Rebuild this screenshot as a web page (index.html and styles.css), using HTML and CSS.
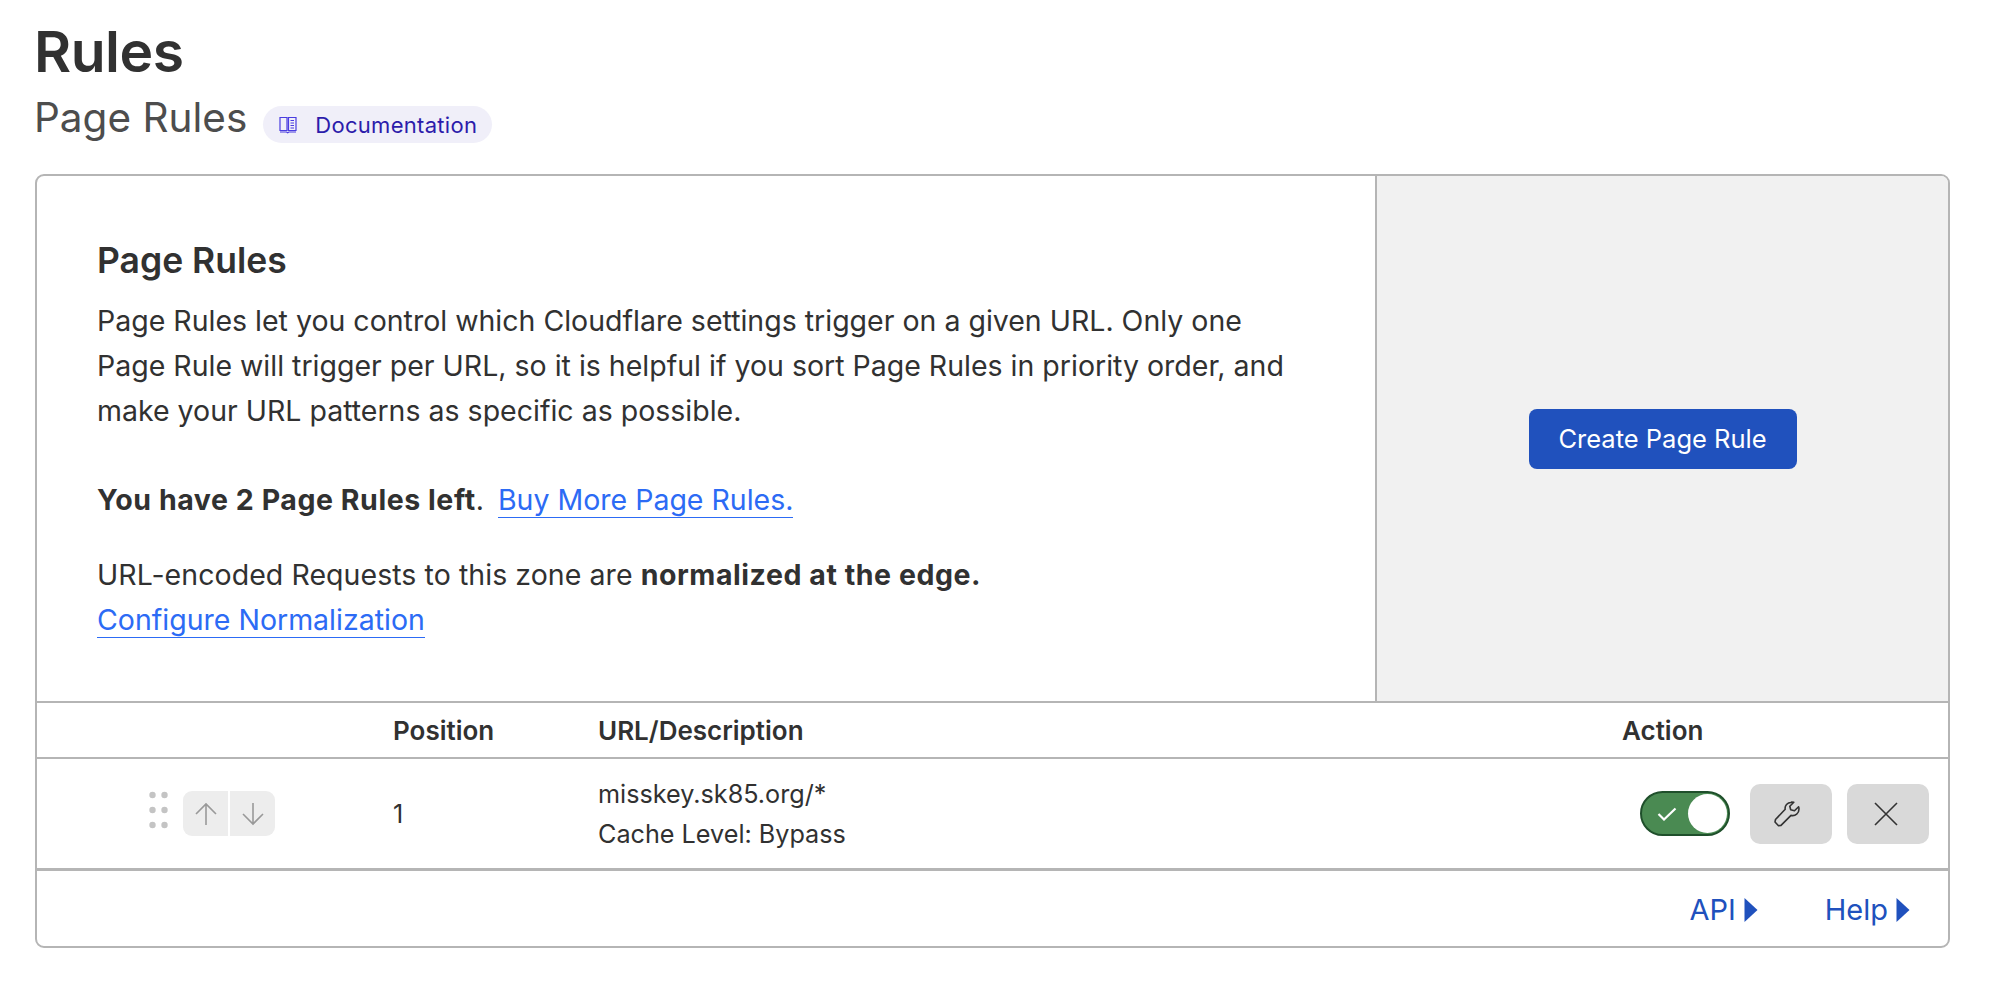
FILE: index.html
```html
<!DOCTYPE html>
<html lang="en">
<head>
<meta charset="utf-8">
<title>Page Rules</title>
<link rel="stylesheet" href="styles.css">
</head>
<body>
<main class="page">
  <h1 class="title">Rules</h1>
  <div class="subhead">
    <h2 class="subtitle">Page Rules</h2>
    <a class="doc-pill" href="#">
      <svg class="doc-icon" viewBox="0 0 18 18" fill="none" stroke="currentColor" stroke-width="1.2"><path d="M1 1.500h7v13H1zM9.500 1.500H17v13H9.500zM1 16h6.500l1.200.8 1.200-.8H17M11.500 4.500h3.500M11.500 7h3.500M11.500 9.500h3.500M11.500 12h3.500"/></svg>
      <span class="doc-label">Documentation</span>
    </a>
  </div>
  <section class="card">
    <div class="intro">
      <div class="intro-text">
        <h3 class="card-title">Page Rules</h3>
        <p class="para">Page Rules let you control which Cloudflare settings trigger on a given URL. Only one<br>Page Rule will trigger per URL, so it is helpful if you sort Page Rules in priority order, and<br>make your URL patterns as specific as possible.</p>
        <p class="para para-gap"><strong>You have 2 Page Rules left</strong>.&nbsp; <a class="link" href="#">Buy More Page Rules.</a></p>
        <p class="para para-gap-sm">URL-encoded Requests to this zone are <strong>normalized at the edge.</strong><br><a class="link" href="#">Configure Normalization</a></p>
      </div>
      <div class="intro-side">
        <button class="primary" type="button">Create Page Rule</button>
      </div>
    </div>
    <div class="row head-row">
      <div class="col-handle"></div>
      <div class="col-pos">Position</div>
      <div class="col-url">URL/Description</div>
      <div class="col-action">Action</div>
    </div>
    <div class="row rule-row">
      <div class="col-handle">
        <svg class="grip" viewBox="0 0 19 39" fill="#c4c4c4"><circle cx="3.500" cy="4" r="3.200"/><circle cx="15.500" cy="4" r="3.200"/><circle cx="3.500" cy="19" r="3.200"/><circle cx="15.500" cy="19" r="3.200"/><circle cx="3.500" cy="34" r="3.200"/><circle cx="15.500" cy="34" r="3.200"/></svg>
        <div class="stepper">
          <span class="step"><svg viewBox="0 0 22 24" fill="none" stroke="#999" stroke-width="1.600"><path d="M11 23V2M1 12 11 2l10 10"/></svg></span>
          <span class="step"><svg viewBox="0 0 22 24" fill="none" stroke="#999" stroke-width="1.600"><path d="M11 1v21M1 12l10 10 10-10"/></svg></span>
        </div>
      </div>
      <div class="col-pos">1</div>
      <div class="col-url">
        <div>misskey.sk85.org/*</div>
        <div>Cache Level: Bypass</div>
      </div>
      <div class="col-action actions">
        <span class="toggle">
          <svg class="check" viewBox="0 0 20 14" fill="none" stroke="#fff" stroke-width="2.200"><path d="M1.500 7 7 12.500 18.500 1.500"/></svg>
          <span class="knob"></span>
        </span>
        <button class="icon-btn icon-btn-wrench" type="button" aria-label="Edit">
          <svg viewBox="0 0 26 26" fill="none" stroke="#333" stroke-width="1.600" stroke-linejoin="round"><path d="M17 1.500c-3.500 0-6.500 3-5.800 6.800L1.500 18.500l-.5 2.500 3.500 3.800 2.500-.4 10-10c4.500 1 8-2.200 8-6.400 0-.8-.1-1.500-.4-2.200l-4.100 4-3.800-1-.9-3.500 4-4c-.7-.2-1.500-.3-2.300-.3z"/></svg>
        </button>
        <button class="icon-btn icon-btn-x" type="button" aria-label="Delete">
          <svg viewBox="0 0 24 24" fill="none" stroke="#333" stroke-width="1.600"><path d="M1 1l22 22M23 1 1 23"/></svg>
        </button>
      </div>
    </div>
    <div class="foot">
      <a class="foot-link" href="#">API<svg class="caret" viewBox="0 0 13 24" fill="currentColor"><path d="M0 0l13 12L0 24z"/></svg></a>
      <a class="foot-link" href="#">Help<svg class="caret" viewBox="0 0 13 24" fill="currentColor"><path d="M0 0l13 12L0 24z"/></svg></a>
    </div>
  </section>
</main>
</body>
</html>
```

FILE: styles.css
```css
* { box-sizing: border-box; }
html, body { margin: 0; background: #fff; }
body { font-family: Inter, "Liberation Sans", sans-serif; color: #313131; }
.page { padding: 20px 50px 0 34px; }
.title { margin: 0; font-size: 57px; line-height: 64px; font-weight: 600; color: #313131; letter-spacing: -0.5px; }
.subhead { display: flex; align-items: center; gap: 16px; margin-top: 7px; height: 54px; }
.subtitle { margin: 0; font-size: 40.500px; line-height: 54px; font-weight: 400; color: #4d4d4d; }
.doc-pill { display: inline-flex; align-items: center; gap: 18px; height: 37px; margin-top: 13px; padding: 0 15px 0 16px; border-radius: 19px; background: #f0eff9; color: #2c1cab; font-size: 22px; text-decoration: none; }
.doc-icon { width: 18px; height: 18px; color: #4a3de0; }
.doc-label { letter-spacing: 0.3px; }
.card { margin: 29px 0 0 1px; width: 1915px; border: 2px solid #b5b5b5; border-radius: 9px; overflow: hidden; }
.intro { display: flex; height: 527px; border-bottom: 2px solid #b5b5b5; }
.intro-text { width: 1340px; padding: 63px 0 0 60px; border-right: 2px solid #b5b5b5; }
.card-title { margin: 0 0 15px; font-size: 35.500px; line-height: 44px; font-weight: 600; }
.para { margin: 0; font-size: 28.500px; line-height: 45px; white-space: nowrap; }
.para-gap { margin-top: 44px; }
.para-gap-sm { margin-top: 30px; letter-spacing: 0.06px; }
.para strong { font-weight: 700; letter-spacing: 0.56px; }
.link { color: #2c6bf5; letter-spacing: 0; text-decoration: none; border-bottom: 1.500px solid #2c6bf5; }
.para-gap .link { margin-left: -2px; }
.intro-side { flex: 1; display: flex; align-items: center; justify-content: center; background: #f1f1f1; }
.primary { width: 268px; height: 60px; border: 0; border-radius: 8px; background: #2051bd; color: #fff; font: 400 25.500px Inter, sans-serif; }
.row { display: flex; align-items: center; }
.head-row { height: 56px; padding-top: 1px; border-bottom: 2px solid #b5b5b5; font-size: 26px; font-weight: 600; }
.rule-row { height: 112px; border-bottom: 3px solid #b5b5b5; font-size: 25.200px; }
.col-handle { width: 356px; display: flex; align-items: center; padding-left: 112px; gap: 15px; }
.col-pos { width: 205px; }
.col-url { flex: 1; padding-top: 1px; line-height: 40px; }
.col-action { width: 326px; flex-shrink: 0; }
.grip { width: 19px; height: 39px; margin-bottom: 6px; }
.stepper { display: flex; gap: 2px; width: 92px; height: 45px; border-radius: 9px; overflow: hidden; }
.step { flex: 1; display: flex; align-items: center; justify-content: center; background: #ededed; }
.step svg { width: 22px; height: 24px; }
.actions { display: flex; align-items: center; padding-left: 18px; gap: 15px; }
.toggle { position: relative; display: flex; align-items: center; flex-shrink: 0; width: 90px; height: 45px; margin-right: 5px; border: 2px solid #1f4f2b; border-radius: 23px; background: #4a8a52; }
.check { width: 20px; height: 14px; margin-left: 15px; }
.knob { position: absolute; right: 1px; top: 1px; width: 39px; height: 39px; border-radius: 50%; background: #fff; }
.icon-btn { display: flex; align-items: center; justify-content: center; flex-shrink: 0; width: 82px; height: 60px; padding: 0; border: 0; border-radius: 10px; background: #d9d9d9; }
.icon-btn svg { width: 24px; height: 24px; }
.icon-btn-wrench svg { width: 26px; height: 26px; margin-right: 9px; }
.icon-btn-x svg { margin-right: 5px; }
.foot { display: flex; justify-content: flex-end; gap: 67px; align-items: center; height: 75px; padding: 2px 38px 0 0; }
.foot-link { display: inline-flex; align-items: center; gap: 8px; color: #2051bd; font-size: 29px; text-decoration: none; }
.caret { width: 14px; height: 24px; }
```
